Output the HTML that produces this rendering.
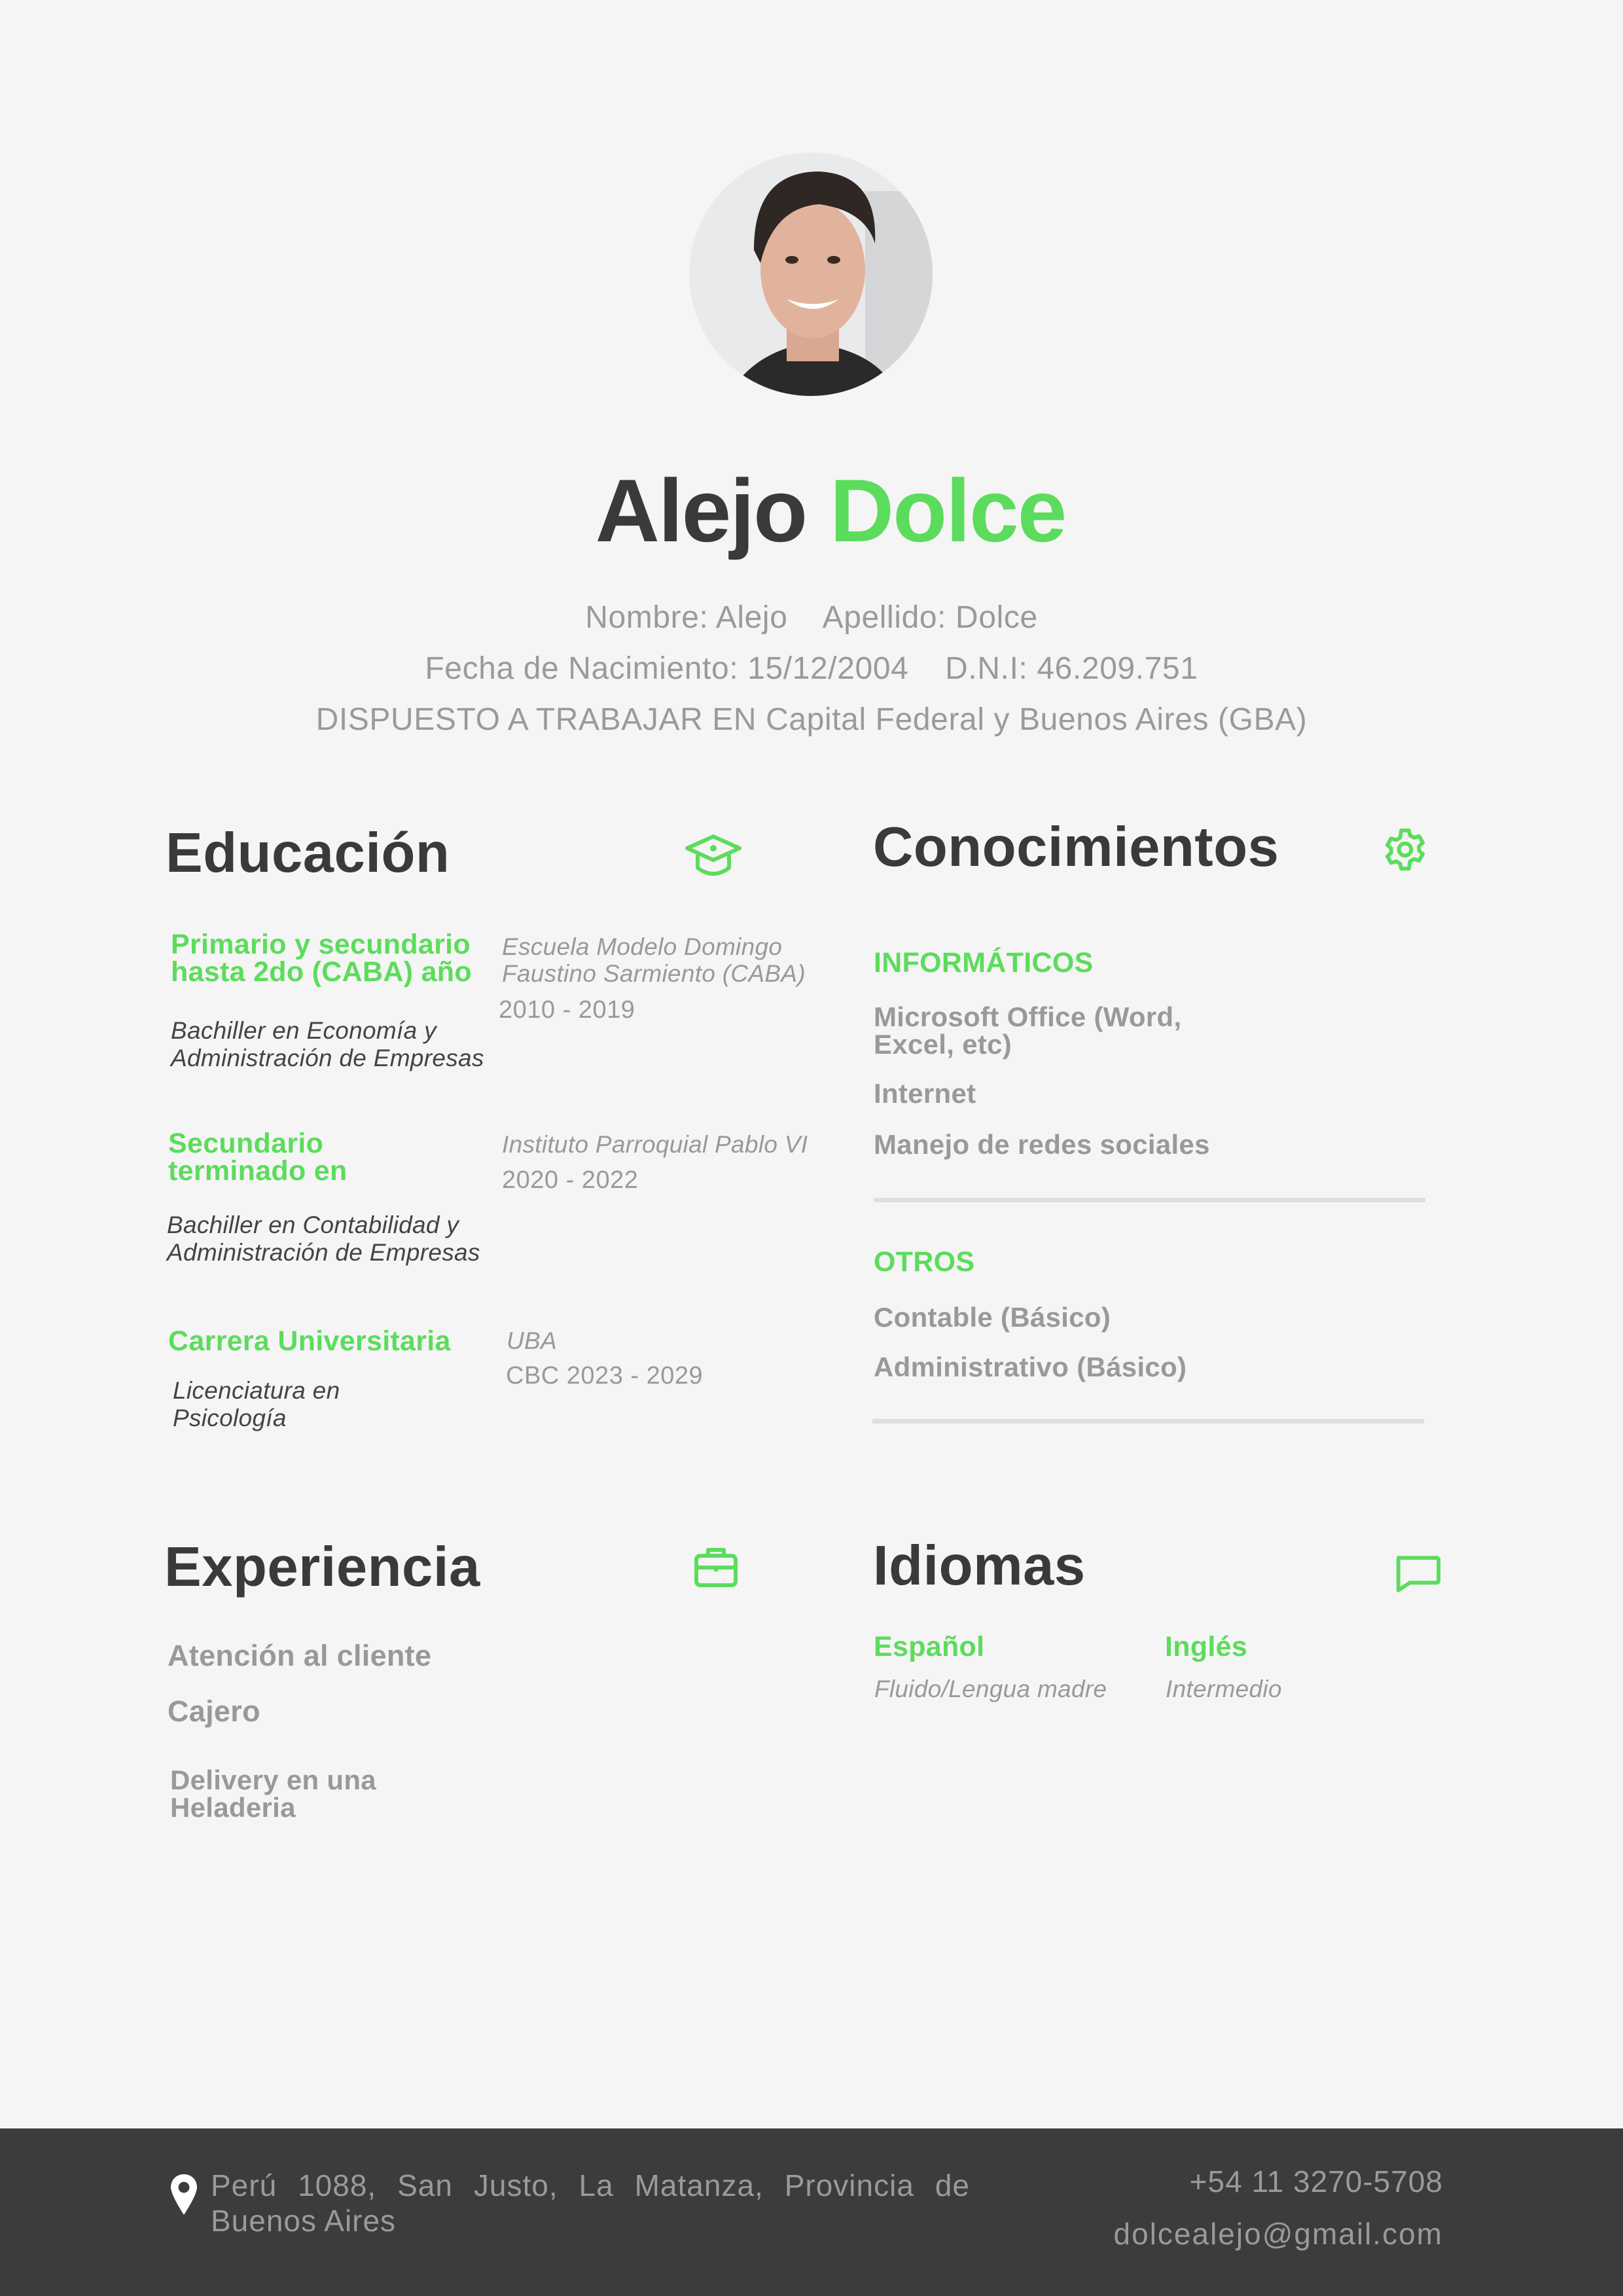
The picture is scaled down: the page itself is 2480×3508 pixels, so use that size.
<!DOCTYPE html>
<html><head><meta charset="utf-8"><style>
*{margin:0;padding:0;box-sizing:border-box}
body{width:2480px;height:3508px;background:#f5f5f5;position:relative;overflow:hidden;font-family:"Liberation Sans",sans-serif}
.t{position:absolute;white-space:nowrap}
.h{font-weight:bold;color:#3a3a3a;font-size:85px;line-height:100px;letter-spacing:0.5px}
.g{font-weight:bold;color:#5cdc5c;font-size:43px;line-height:42px;letter-spacing:0.3px}
.i{font-style:italic;color:#999;font-size:37px;line-height:41px;letter-spacing:0.3px}
.d{font-style:italic;color:#444;font-size:37px;line-height:42px;letter-spacing:0.3px}
.gr{font-weight:bold;color:#999;font-size:42px;line-height:42px;letter-spacing:0.3px}
.n{color:#999;font-size:38px;line-height:42px;letter-spacing:0.5px}
.info{color:#9a9a9a;font-size:48px;line-height:60px;left:0;width:2480px;text-align:center;letter-spacing:0.6px}
.line{position:absolute;height:7px;background:#dedede}
</style></head><body>

<svg class="t" style="left:1052px;top:232px" width="374" height="374" viewBox="0 0 374 374">
<defs><clipPath id="c"><circle cx="187" cy="187" r="186"/></clipPath></defs>
<g clip-path="url(#c)">
<rect width="374" height="374" fill="#e9eaec"/>
<rect x="270" y="60" width="110" height="320" fill="#d4d6d8"/>
<path d="M60 374 Q90 320 150 300 L230 300 Q300 320 320 374Z" fill="#2a2a2a"/>
<rect x="150" y="250" width="80" height="70" fill="#d9a890"/>
<ellipse cx="190" cy="180" rx="80" ry="105" fill="#e2b39c"/>
<path d="M100 150 Q100 30 200 30 Q290 35 285 140 Q270 90 200 80 Q130 85 110 170Z" fill="#2e2723"/>
<path d="M150 225 Q190 255 230 225 Q190 240 150 225Z" fill="#fff"/>
<ellipse cx="158" cy="165" rx="10" ry="6" fill="#3a2a22"/>
<ellipse cx="222" cy="165" rx="10" ry="6" fill="#3a2a22"/>
</g></svg>

<div class="t" style="left:0;width:2480px;text-align:center;top:700px;font-size:136px;line-height:160px;font-weight:bold;letter-spacing:-2px;color:#3a3a3a;padding-left:58px">Alejo <span style="color:#5cdc5c">Dolce</span></div>

<div class="t info" style="top:914px">Nombre: Alejo &nbsp;&nbsp; Apellido: Dolce</div>
<div class="t info" style="top:992px">Fecha de Nacimiento: 15/12/2004 &nbsp;&nbsp; D.N.I: 46.209.751</div>
<div class="t info" style="top:1070px">DISPUESTO A TRABAJAR EN Capital Federal y Buenos Aires (GBA)</div>

<!-- Educacion -->
<div class="t h" style="left:253px;top:1254px">Educación</div>
<svg class="t" style="left:1044px;top:1272px" width="92" height="72" viewBox="0 0 46 36" fill="none" stroke="#5cdc5c" stroke-width="3" stroke-linejoin="round"><path d="M23 3 L43 12 L23 21 L3 12Z"/><circle cx="23" cy="12" r="1" fill="#5cdc5c"/><path d="M11 17 V27 Q23 36 35 27 V17"/></svg>

<div class="t g" style="left:261px;top:1422px">Primario y secundario<br>hasta 2do (CABA) año</div>
<div class="t i" style="left:767px;top:1426px">Escuela Modelo Domingo<br>Faustino Sarmiento (CABA)</div>
<div class="t n" style="left:762px;top:1522px">2010 - 2019</div>
<div class="t d" style="left:261px;top:1554px">Bachiller en Economía y<br>Administración de Empresas</div>

<div class="t g" style="left:257px;top:1726px">Secundario<br>terminado en</div>
<div class="t i" style="left:767px;top:1728px">Instituto Parroquial Pablo VI</div>
<div class="t n" style="left:767px;top:1782px">2020 - 2022</div>
<div class="t d" style="left:255px;top:1851px">Bachiller en Contabilidad y<br>Administración de Empresas</div>

<div class="t g" style="left:257px;top:2028px">Carrera Universitaria</div>
<div class="t i" style="left:774px;top:2028px">UBA</div>
<div class="t n" style="left:773px;top:2081px">CBC 2023 - 2029</div>
<div class="t d" style="left:264px;top:2104px">Licenciatura en<br>Psicología</div>

<!-- Conocimientos -->
<div class="t h" style="left:1334px;top:1245px">Conocimientos</div>
<svg class="t" style="left:2112px;top:1263px" width="70" height="70" viewBox="0 0 24 24" fill="none" stroke="#5cdc5c" stroke-width="2" stroke-linejoin="round"><path d="M10 2h4l.6 2.6 2.1 1.2 2.6-.8 2 3.4-2 1.8v2.4l2 1.8-2 3.4-2.6-.8-2.1 1.2L14 22h-4l-.6-2.6-2.1-1.2-2.6.8-2-3.4 2-1.8v-2.4l-2-1.8 2-3.4 2.6.8 2.1-1.2Z"/><circle cx="12" cy="12" r="3.2"/></svg>

<div class="t g" style="left:1335px;top:1450px;font-size:43px">INFORMÁTICOS</div>
<div class="t gr" style="left:1335px;top:1533px">Microsoft Office (Word,<br>Excel, etc)</div>
<div class="t gr" style="left:1335px;top:1650px">Internet</div>
<div class="t gr" style="left:1335px;top:1728px">Manejo de redes sociales</div>
<div class="line" style="left:1335px;top:1830px;width:843px"></div>
<div class="t g" style="left:1335px;top:1907px;font-size:43px">OTROS</div>
<div class="t gr" style="left:1335px;top:1992px">Contable (Básico)</div>
<div class="t gr" style="left:1335px;top:2068px">Administrativo (Básico)</div>
<div class="line" style="left:1333px;top:2168px;width:843px"></div>

<!-- Experiencia -->
<div class="t h" style="left:251px;top:2345px">Experiencia</div>
<svg class="t" style="left:1058px;top:2362px" width="72" height="66" viewBox="0 0 24 22" fill="none" stroke="#5cdc5c" stroke-width="2" stroke-linejoin="round"><rect x="2" y="5" width="20" height="15" rx="2"/><path d="M8 5V2h8v3M2 11h20M12 10v3"/></svg>
<div class="t gr" style="left:256px;top:2507px;font-size:45px;line-height:46px">Atención al cliente</div>
<div class="t gr" style="left:256px;top:2592px;font-size:45px;line-height:46px">Cajero</div>
<div class="t gr" style="left:260px;top:2699px">Delivery en una<br>Heladeria</div>

<!-- Idiomas -->
<div class="t h" style="left:1334px;top:2343px">Idiomas</div>
<svg class="t" style="left:2128px;top:2374px" width="76" height="62" viewBox="0 0 26 21" fill="none" stroke="#5cdc5c" stroke-width="2" stroke-linejoin="round"><path d="M3 2h20a1 1 0 0 1 1 1v11a1 1 0 0 1-1 1H9l-6 4V3a1 1 0 0 1 1-1Z"/></svg>
<div class="t g" style="left:1335px;top:2495px">Español</div>
<div class="t g" style="left:1780px;top:2495px">Inglés</div>
<div class="t i" style="left:1336px;top:2560px">Fluido/Lengua madre</div>
<div class="t i" style="left:1781px;top:2560px">Intermedio</div>

<!-- Footer -->
<div style="position:absolute;left:0;top:3252px;width:2480px;height:256px;background:#3c3c3c"></div>
<svg class="t" style="left:259px;top:3320px" width="44" height="66" viewBox="0 0 22 33"><path d="M11 1C5 1 1 5.5 1 11c0 6 10 21 10 21s10-15 10-21C21 5.5 17 1 11 1Z" fill="#fff"/><circle cx="11" cy="11" r="4.2" fill="#3c3c3c"/></svg>
<div class="t" style="left:322px;top:3312px;font-size:46px;line-height:54px;color:#9a9a9a;width:1160px;text-align:justify;white-space:normal;text-align-last:left;letter-spacing:1px">Perú&nbsp; 1088,&nbsp; San&nbsp; Justo,&nbsp; La&nbsp; Matanza,&nbsp; Provincia&nbsp; de Buenos Aires</div>
<div class="t" style="right:275px;top:3306px;font-size:46px;line-height:54px;color:#9a9a9a;letter-spacing:1px">+54 11 3270-5708</div>
<div class="t" style="right:275px;top:3386px;font-size:46px;line-height:54px;color:#9a9a9a;letter-spacing:2px">dolcealejo@gmail.com</div>
</body></html>
